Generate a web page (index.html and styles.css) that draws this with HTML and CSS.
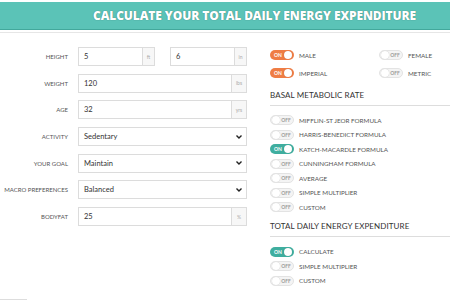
FILE: index.html
```html
<!DOCTYPE html>
<html>
<head>
<meta charset="utf-8">
<link rel="stylesheet" href="styles.css">
</head>
<body>
<div class="page">
  <header class="banner"><h1>CALCULATE YOUR TOTAL DAILY ENERGY EXPENDITURE</h1></header>
  <div class="rule"></div>
  <main class="content">
    <section class="form">
      <label class="lbl">HEIGHT</label>
      <div class="pair">
        <div class="group"><span class="val">5</span><span class="addon">ft</span></div>
        <div class="group"><span class="val">6</span><span class="addon">in</span></div>
      </div>
      <label class="lbl">WEIGHT</label>
      <div class="group"><span class="val">120</span><span class="addon wide">lbs</span></div>
      <label class="lbl">AGE</label>
      <div class="group"><span class="val">32</span><span class="addon wide">yrs</span></div>
      <label class="lbl">ACTIVITY</label>
      <div class="select"><span class="val">Sedentary</span><svg class="caret" viewBox="0 0 6 4" width="6" height="4"><path d="M0.5 0.5 L3 3 L5.5 0.5" fill="none" stroke="#222" stroke-width="1.4"/></svg></div>
      <label class="lbl">YOUR GOAL</label>
      <div class="select"><span class="val">Maintain</span><svg class="caret" viewBox="0 0 6 4" width="6" height="4"><path d="M0.5 0.5 L3 3 L5.5 0.5" fill="none" stroke="#222" stroke-width="1.4"/></svg></div>
      <label class="lbl">MACRO PREFERENCES</label>
      <div class="select"><span class="val">Balanced</span><svg class="caret" viewBox="0 0 6 4" width="6" height="4"><path d="M0.5 0.5 L3 3 L5.5 0.5" fill="none" stroke="#222" stroke-width="1.4"/></svg></div>
      <label class="lbl">BODYFAT</label>
      <div class="group"><span class="val">25</span><span class="addon wide">%</span></div>
    </section>
    <section class="opts">
      <div class="duo">
        <div class="opt"><span class="tg on orange"><b>ON</b><i></i></span><span class="ol">MALE</span></div>
        <div class="opt"><span class="tg"><i></i><b>OFF</b></span><span class="ol">FEMALE</span></div>
      </div>
      <div class="duo">
        <div class="opt"><span class="tg on orange"><b>ON</b><i></i></span><span class="ol">IMPERIAL</span></div>
        <div class="opt"><span class="tg"><i></i><b>OFF</b></span><span class="ol">METRIC</span></div>
      </div>
      <h2 class="sec">BASAL METABOLIC RATE</h2>
      <div class="list">
        <div class="opt"><span class="tg"><i></i><b>OFF</b></span><span class="ol">MIFFLIN-ST JEOR FORMULA</span></div>
        <div class="opt"><span class="tg"><i></i><b>OFF</b></span><span class="ol">HARRIS-BENEDICT FORMULA</span></div>
        <div class="opt"><span class="tg on teal"><b>ON</b><i></i></span><span class="ol">KATCH-MACARDLE FORMULA</span></div>
        <div class="opt"><span class="tg"><i></i><b>OFF</b></span><span class="ol">CUNNINGHAM FORMULA</span></div>
        <div class="opt"><span class="tg"><i></i><b>OFF</b></span><span class="ol">AVERAGE</span></div>
        <div class="opt"><span class="tg"><i></i><b>OFF</b></span><span class="ol">SIMPLE MULTIPLIER</span></div>
        <div class="opt"><span class="tg"><i></i><b>OFF</b></span><span class="ol">CUSTOM</span></div>
      </div>
      <h2 class="sec sec2">TOTAL DAILY ENERGY EXPENDITURE</h2>
      <div class="list">
        <div class="opt"><span class="tg on teal"><b>ON</b><i></i></span><span class="ol">CALCULATE</span></div>
        <div class="opt"><span class="tg"><i></i><b>OFF</b></span><span class="ol">SIMPLE MULTIPLIER</span></div>
        <div class="opt"><span class="tg"><i></i><b>OFF</b></span><span class="ol">CUSTOM</span></div>
      </div>
    </section>
  </main>
  <div class="stub"></div>
</div>
</body>
</html>
```
FILE: styles.css
```css
* { box-sizing: border-box; }
html, body { margin: 0; padding: 0; background: #fff; }
body { font-family: Lato, "Open Sans", sans-serif; color: #444; overflow: hidden; height: 302px; }
.page { padding-top: 2px; }
.banner {
  background: #5bc3b7;
  height: 28px;
  border-bottom: 1px solid #43a89c;
  display: flex;
  align-items: center;
  padding-left: 93px;
}
.banner h1 {
  margin: 0;
  font-family: "Open Sans", sans-serif;
  font-weight: 800;
  font-size: 12px;
  letter-spacing: -0.1px;
  color: #fff;
  text-shadow: 0 0 1px rgba(0,0,0,0.45);
  white-space: nowrap;
}
.rule { height: 1px; background: #e6e6e6; margin-top: 2px; }
.content { display: flex; align-items: flex-start; padding-top: 14px; }
.form {
  width: 247px;
  display: grid;
  grid-template-columns: 68px 1fr;
  column-gap: 10px;
  row-gap: 7.7px;
  align-items: center;
}
.lbl {
  text-align: right;
  font-size: 6px;
  color: #555;
  white-space: nowrap;
}
.pair { display: flex; gap: 15px; }
.pair .group { flex: 1; }
.group, .select {
  height: 19px;
  border: 1px solid #dcdcdc;
  display: flex;
  align-items: center;
  font-size: 7.5px;
  color: #333;
}
.val { flex: 1; padding-left: 5px; }
.addon {
  width: 12px;
  height: 100%;
  border-left: 1px solid #dcdcdc;
  background: #f7f7f7;
  color: #aaa;
  font-size: 5px;
  display: flex; align-items: center; justify-content: center;
}
.addon.wide { width: 15px; }
.select { padding-right: 4px; }
.caret { display: block; }
.opts { margin-left: 23px; flex: 1; margin-top: -1px; }
.duo { display: flex; height: 18px; align-items: center; }
.duo .opt:first-child { width: 109px; }
.opt { display: flex; align-items: center; }
.list .opt { height: 14.5px; }
.tg {
  width: 24px; height: 10px;
  border-radius: 5px;
  border: 1px solid #e3e3e3;
  background: #f4f4f4;
  display: flex; align-items: center;
  padding: 0 1px;
  flex-shrink: 0;
  overflow: hidden;
}
.tg i { width: 8px; height: 8px; border-radius: 50%; background: #fff; display: block; flex-shrink: 0; box-shadow: 0 0 1px rgba(0,0,0,0.25); }
.tg b { flex: 1; font-weight: 700; font-size: 5px; line-height: 8px; text-align: center; color: #9a9a9a; }
.tg.on { border-color: transparent; }
.tg.on b { color: #fff; }
.tg.orange { background: #ef7d45; }
.tg.teal { background: #3fae9f; }
.ol { margin-left: 5px; font-size: 6.3px; color: #555; white-space: nowrap; }
.sec {
  margin: 8px 0 7px;
  font-size: 8px;
  font-weight: 400;
  color: #333;
  padding-bottom: 5px;
  border-bottom: 1px solid #ddd;
  letter-spacing: 0.1px;
}
.sec2 { margin-top: 6px; margin-bottom: 8px; }
.stub { position: absolute; left: 0; top: 299px; width: 27px; height: 3px; border-top: 1px solid #ddd; }
```
